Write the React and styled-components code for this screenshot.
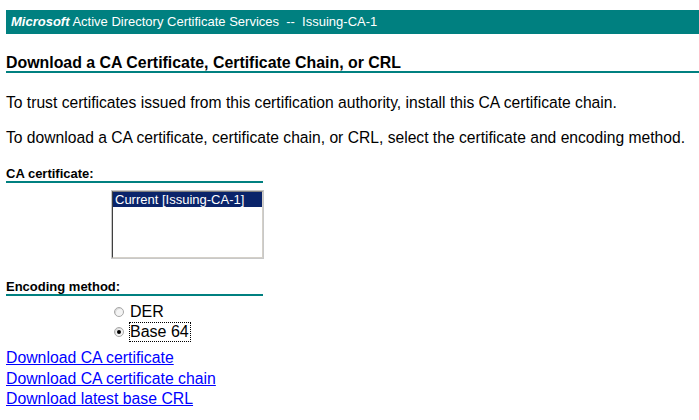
import React from "react";
import styled, { createGlobalStyle } from "styled-components";

const GlobalStyle = createGlobalStyle`
  html, body {
    margin: 0;
    padding: 0;
    background: #ffffff;
    overflow: hidden;
  }
  body {
    font-family: "Liberation Sans", Arial, sans-serif;
    color: #000000;
  }
`;

const Page = styled.div`
  padding: 10px 0 0 6px;
`;

const Banner = styled.div`
  background: #008080;
  color: #ffffff;
  height: 24px;
  line-height: 24px;
  font-size: 13px;
  padding-left: 5px;
  white-space: pre;
`;

const Brand = styled.span`
  font-weight: bold;
  font-style: italic;
`;

const Title = styled.div`
  margin-top: 20px;
  font-size: 15.9px;
  font-weight: bold;
  line-height: 17px;
  border-bottom: 2px solid #008080;
`;

const Para = styled.p`
  margin: ${(p) => p.$top}px 0 0 0;
  font-size: 15.65px;
  line-height: 18px;
  white-space: nowrap;
`;

const SectionLabel = styled.div`
  margin-top: ${(p) => p.$top}px;
  width: 257px;
  font-size: 13px;
  font-weight: bold;
  line-height: 15px;
  border-bottom: 2px solid #008080;
`;

const ListBox = styled.div`
  margin: 7px 0 0 105px;
  width: 153px;
  height: 69px;
  box-sizing: border-box;
  border: 1px solid #c8c8c8;
`;

const ListInner = styled.div`
  height: 100%;
  box-sizing: border-box;
  border-top: 1px solid #808080;
  border-left: 1px solid #404040;
  border-right: 1px solid #d4d0c8;
  border-bottom: 1px solid #d4d0c8;
  background: #ffffff;
`;

const ListItem = styled.div`
  height: 15px;
  line-height: 15px;
  font-size: 13px;
  padding-left: 2px;
  background: ${(p) => (p.$selected ? "#0a246a" : "transparent")};
  color: ${(p) => (p.$selected ? "#ffffff" : "#000000")};
  white-space: nowrap;
`;

const RadioGroup = styled.div`
  margin: 6px 0 0 108px;
  display: flex;
  flex-direction: column;
`;

const RadioRow = styled.label`
  display: flex;
  align-items: center;
  gap: 6px;
  height: 20px;
  font-size: 16px;
  line-height: 20px;
`;

const RadioDot = styled.span`
  position: relative;
  width: 10px;
  height: 10px;
  box-sizing: border-box;
  border-radius: 50%;
  border: 1px solid #a8a8a8;
  background: #f4f4f4;
  box-shadow: inset 1px 1px 0 #d8d8d8;
  flex: none;
  &::after {
    content: "";
    display: ${(p) => (p.$checked ? "block" : "none")};
    position: absolute;
    left: 2px;
    top: 2px;
    width: 4px;
    height: 4px;
    border-radius: 50%;
    background: #000000;
  }
`;

const RadioText = styled.span`
  outline: ${(p) => (p.$focused ? "1px dotted #000000" : "none")};
  line-height: 18px;
  padding: 0 1px 0 0;
`;

const Links = styled.div`
  margin-top: 6px;
  display: flex;
  flex-direction: column;
  align-items: flex-start;
`;

const Link = styled.a`
  font-size: 15.8px;
  line-height: 20.5px;
  color: #0000ff;
  text-decoration: underline;
`;

export default function App() {
  return (
    <>
      <GlobalStyle />
      <Page>
        <Banner>
          <Brand>Microsoft</Brand> Active Directory Certificate Services  --  Issuing-CA-1
        </Banner>
        <Title>Download a CA Certificate, Certificate Chain, or CRL</Title>
        <Para $top={21}>
          To trust certificates issued from this certification authority, install this CA certificate chain.
        </Para>
        <Para $top={17}>
          To download a CA certificate, certificate chain, or CRL, select the certificate and encoding method.
        </Para>
        <SectionLabel $top={19}>CA certificate:</SectionLabel>
        <ListBox>
          <ListInner>
            <ListItem $selected>Current [Issuing-CA-1]</ListItem>
          </ListInner>
        </ListBox>
        <SectionLabel $top={20}>Encoding method:</SectionLabel>
        <RadioGroup>
          <RadioRow>
            <RadioDot />
            <RadioText>DER</RadioText>
          </RadioRow>
          <RadioRow>
            <RadioDot $checked />
            <RadioText $focused>Base 64</RadioText>
          </RadioRow>
        </RadioGroup>
        <Links>
          <Link href="#">Download CA certificate</Link>
          <Link href="#">Download CA certificate chain</Link>
          <Link href="#">Download latest base CRL</Link>
        </Links>
      </Page>
    </>
  );
}
